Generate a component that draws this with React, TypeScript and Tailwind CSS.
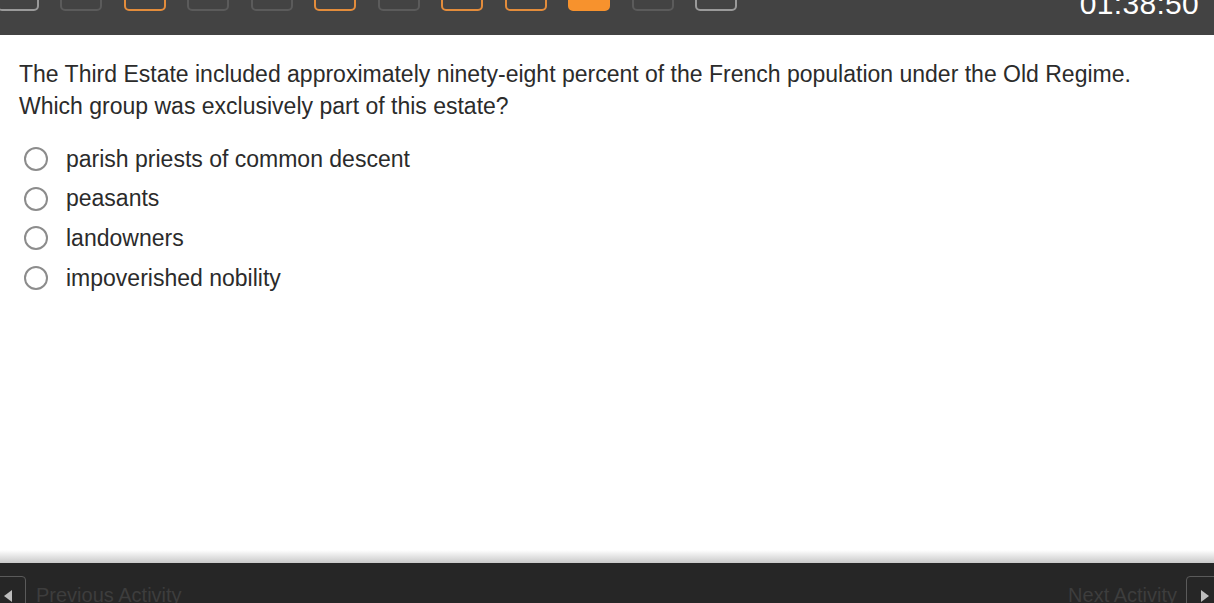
import React from 'react';

type Status = 'seen' | 'open' | 'done' | 'current';

const steps: Status[] = ['seen', 'open', 'done', 'open', 'open', 'done', 'open', 'done', 'done', 'current', 'open', 'seen'];

const stepClass: Record<Status, string> = {
  seen: 'border-2 border-[#9a9a9a]',
  open: 'border-2 border-[#5b5b5b]',
  done: 'border-2 border-[#e38c3b]',
  current: 'bg-[#f7922d] border-2 border-[#f7922d]',
};

const options = ['parish priests of common descent', 'peasants', 'landowners', 'impoverished nobility'];

export default function App() {
  return (
    <div className="h-[603px] w-full flex flex-col bg-white overflow-hidden" style={{ fontFamily: '"Liberation Sans", Arial, sans-serif' }}>
      {/* Progress bar */}
      <div className="h-[35px] bg-[#434343] flex items-start justify-between overflow-hidden shrink-0">
        <div className="flex gap-[21.5px] -ml-[3.5px] -mt-[20px]">
          {steps.map((s, i) => (
            <div key={i} className={`w-[42px] h-[31px] rounded-[5px] ${stepClass[s]}`} />
          ))}
        </div>
        <div className="text-white text-[30px] leading-none -mt-[11px] pr-[15px] tracking-[0.3px]">01:38:50</div>
      </div>

      {/* Question */}
      <div className="flex-1 px-[19px] pt-[23px]">
        <p className="text-[23px] leading-[32px] text-[#2b2b2b]">
          The Third Estate included approximately ninety-eight percent of the French population under the Old Regime.
          <br />
          Which group was exclusively part of this estate?
        </p>
        <div className="mt-[17px] flex flex-col">
          {options.map((o) => (
            <label key={o} className="flex items-center h-[39.7px] pl-[5px] cursor-pointer">
              <span className="w-[24px] h-[24px] rounded-full border-2 border-[#8c8c8c] bg-white shrink-0" />
              <span className="ml-[18px] text-[23px] text-[#2b2b2b]">{o}</span>
            </label>
          ))}
        </div>
      </div>

      {/* Footer */}
      <div className="h-[13px] bg-gradient-to-b from-white to-[#c9c9c9] shrink-0" />
      <div className="h-[40px] bg-[#262626] flex items-start justify-between shrink-0 overflow-hidden">
        <div className="flex items-start pt-[13px]">
          <div className="w-[37px] h-[40px] -ml-[11px] rounded-[4px] border border-[#5a5a5a] flex items-start justify-end pr-[13px] pt-[13px]">
            <svg width="8" height="12" viewBox="0 0 8 12"><polygon points="8,0 8,12 0,6" fill="#bdbdbd" /></svg>
          </div>
          <span className="ml-[10px] mt-[7px] text-[20px] leading-[24px] text-[#3d3d3d]">Previous Activity</span>
        </div>
        <div className="flex items-start pt-[13px]">
          <span className="mr-[9px] mt-[7px] text-[20px] leading-[24px] text-[#3d3d3d]">Next Activity</span>
          <div className="w-[40px] h-[40px] -mr-[12px] rounded-[4px] border border-[#5a5a5a] flex items-start justify-start pl-[14px] pt-[13px]">
            <svg width="8" height="12" viewBox="0 0 8 12"><polygon points="0,0 0,12 8,6" fill="#bdbdbd" /></svg>
          </div>
        </div>
      </div>
    </div>
  );
}
